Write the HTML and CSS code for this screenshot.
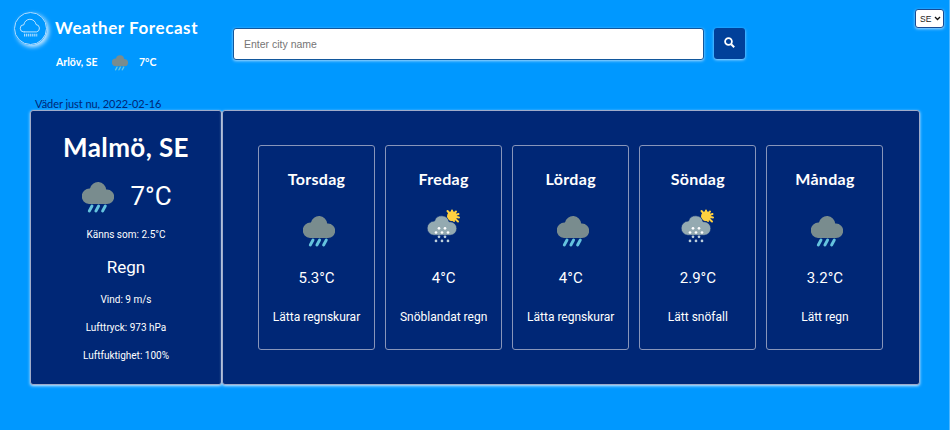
FILE: index.html
```html
<!DOCTYPE html>
<html lang="sv">
<head>
<meta charset="utf-8">
<title>Weather Forecast</title>
<link rel="stylesheet" href="styles.css">
</head>
<body>
<svg class="sprite" aria-hidden="true">
  <symbol id="rain" viewBox="0 0 32 33">
    <path fill="#798c8e" d="M7 24a7.3 7.3 0 0 1 1-15.500A8.200 8.200 0 0 1 24.200 9.600H25a7.200 7.200 0 0 1 0 14.400Z"/>
    <path stroke="#65c3de" stroke-width="2.900" stroke-linecap="round" d="M10 26l-2.700 5M16.600 26l-2.700 5M23.300 26l-2.700 5"/>
  </symbol>
  <symbol id="snow" viewBox="0 0 34 34">
    <path stroke="#ffd03f" stroke-width="2" stroke-linecap="round" d="M25 7V1.500M25 7l4-4.500M25 7l6.500-2M25 7l7 1.500M25 7l6 5.500M25 7l-4.500-5M25 7l2 5"/>
    <circle cx="25" cy="7.300" r="5" fill="#ffd03f"/>
    <path fill="#94aab1" stroke="#002776" stroke-width=".6" d="M7 26.300a6.900 6.900 0 0 1 .5-14.200A7.500 7.500 0 0 1 22 12.700h1a6.800 6.800 0 0 1 0 13.600Z"/>
    <g fill="#fff"><circle cx="12" cy="19.300" r="1.350"/><circle cx="18" cy="19.300" r="1.350"/><circle cx="9" cy="23.500" r="1.350"/><circle cx="15" cy="23.500" r="1.350"/><circle cx="21" cy="23.500" r="1.350"/></g>
    <g fill="#bdd0dc"><circle cx="12" cy="27.800" r="1.350"/><circle cx="18" cy="27.800" r="1.350"/><circle cx="9" cy="31.900" r="1.350"/><circle cx="15" cy="31.900" r="1.350"/><circle cx="21" cy="31.900" r="1.350"/></g>
  </symbol>
</svg>
<header class="header">
  <div class="brand">
    <div class="brand-row">
      <span class="logo"><svg viewBox="0 0 32 32" fill="none" stroke="#d5edff"><path stroke-width=".9" d="M10 19.500H9a3.700 3.700 0 0 1 .2-7.400 6.300 6.300 0 0 1 12.500-.2 3.900 3.900 0 0 1 .8 7.600H9"/><path stroke-width="2.800" stroke-dasharray="1 1.100" d="M9.500 22.800h13.400"/></svg></span>
      <h1 class="title">Weather Forecast</h1>
    </div>
    <div class="local"><span class="local-city">Arlöv, SE</span><svg class="local-icon"><use href="#rain"/></svg><span class="local-temp">7°C</span></div>
  </div>
  <form class="search">
    <input class="search-input" type="text" placeholder="Enter city name">
    <button class="search-button" type="button" aria-label="Search"><svg viewBox="0 0 11 11" fill="none" stroke="#fff" stroke-width="1.800"><circle cx="4.500" cy="4.500" r="3.400"/><path stroke-width="2" d="M7.200 7.200l3 3"/></svg></button>
  </form>
  <div class="language">SE<svg viewBox="0 0 8 6" fill="none" stroke="#111" stroke-width="1.600"><path d="M1 1.200l3 3 3-3"/></svg></div>
</header>
<main class="main">
  <p class="date">Väder just nu, 2022-02-16</p>
  <div class="weather">
    <section class="today">
      <h2 class="city">Malmö, SE</h2>
      <div class="now"><svg class="icon"><use href="#rain"/></svg><span>7°C</span></div>
      <p class="detail feels">Känns som: 2.5°C</p>
      <p class="condition">Regn</p>
      <p class="detail">Vind: 9 m/s</p>
      <p class="detail">Lufttryck: 973 hPa</p>
      <p class="detail">Luftfuktighet: 100%</p>
    </section>
    <section class="forecast">
      <article class="day"><h3>Torsdag</h3><svg class="icon"><use href="#rain"/></svg><p class="temp">5.3°C</p><p class="desc">Lätta regnskurar</p></article>
      <article class="day"><h3>Fredag</h3><svg class="icon icon-snow"><use href="#snow"/></svg><p class="temp">4°C</p><p class="desc">Snöblandat regn</p></article>
      <article class="day"><h3>Lördag</h3><svg class="icon"><use href="#rain"/></svg><p class="temp">4°C</p><p class="desc">Lätta regnskurar</p></article>
      <article class="day"><h3>Söndag</h3><svg class="icon icon-snow"><use href="#snow"/></svg><p class="temp">2.9°C</p><p class="desc">Lätt snöfall</p></article>
      <article class="day"><h3>Måndag</h3><svg class="icon"><use href="#rain"/></svg><p class="temp">3.2°C</p><p class="desc">Lätt regn</p></article>
    </section>
  </div>
</main>
</body>
</html>
```

FILE: styles.css
```css
* { box-sizing: border-box; margin: 0; padding: 0; }
body { height: 430px; overflow: hidden; border-right: 1px solid #4db6ff; background: #0098ff; color: #fff; font-family: Roboto, "Liberation Sans", sans-serif; }
.sprite { display: none; }
svg { display: block; }
.header { display: flex; align-items: flex-start; height: 96px; padding: 9px 5px 0 14px; }
.brand { width: 219px; padding-top: 3px; }
.brand-row { display: flex; align-items: center; gap: 8px; height: 33px; }
.logo { width: 33px; height: 33px; border: 1px solid #b3ddff; border-radius: 50%; box-shadow: 2px 2px 4px #cbe9ff; }
.logo svg { width: 31px; height: 31px; }
.title { margin-top: -2px; font: 700 17px/30px Lato, sans-serif; letter-spacing: .57px; white-space: nowrap; }
.local { display: flex; align-items: center; height: 20px; margin: 7px 0 0 42px; font: 700 10.5px/20px Lato, sans-serif; }
.local-city { width: 56px; }
.local-icon { width: 16px; height: 17px; }
.local-temp { margin-left: 11px; }
.search { display: flex; gap: 10px; padding-top: 19px; }
.search-input { width: 471px; height: 32px; padding: 0 10px; border: 1px solid #12579c; border-radius: 3px; background: #fff; box-shadow: 0 1px 3px #a5d9ff; font: 10.5px "Liberation Sans", sans-serif; color: #222; }
.search-input::placeholder { color: #757575; }
.search-button { width: 31px; height: 31px; padding: 0 0 2px 10px; border: 0; border-radius: 3px; background: #00409a; box-shadow: 0 1px 3px #a5d9ff; }
.search-button svg { width: 11px; height: 11px; }
.language { display: flex; align-items: center; justify-content: space-between; width: 29px; height: 19px; margin-left: auto; padding: 0 2px 0 4px; border: 1px solid #174a93; border-radius: 3px; background: #fff; box-shadow: 0 1px 3px #a5d9ff; color: #222; font: 8.5px "Liberation Sans", sans-serif; }
.language svg { width: 7px; height: 5px; }
.main { padding: 0 29px 0 30px; }
.date { height: 14px; padding-left: 5px; color: #002776; font: 11px/15px Lato, sans-serif; letter-spacing: -.06px; }
.weather { display: grid; grid-template-columns: 192px 698px; height: 275px; text-align: center; }
.today, .forecast { border: 1px solid #9fabc9; border-radius: 3px; background: #002776; box-shadow: 0 1px 3px #cbe9ff; }
.today { padding-top: 19px; }
.city { font: 700 26px/34px Lato, sans-serif; letter-spacing: .4px; }
.icon { width: 32px; height: 33px; }
.now { display: flex; justify-content: center; align-items: center; gap: 16px; height: 35px; margin-top: 15px; padding-left: 2px; font-size: 26px; }
.now span { margin-top: -2px; }
.detail { height: 28px; font-size: 10px; line-height: 28px; }
.feels { margin-top: 7px; }
.condition { height: 37px; font-size: 17px; line-height: 37px; }
.forecast { display: grid; grid-template-columns: repeat(5, 1fr); gap: 10px; padding: 34px 35.500px 34px 35px; }
.day { display: flex; flex-direction: column; align-items: center; border: 1px solid #8895ba; border-radius: 3px; padding-top: 21px; }
.day h3 { font: 700 16px/24px Lato, sans-serif; letter-spacing: .3px; }
.day .icon { margin: 23px 0 0 5px; }
.day .icon-snow { width: 34px; height: 34px; margin: 18px 0 4px 0; }
.temp { margin-top: 20px; font-size: 15px; line-height: 22px; }
.desc { margin-top: 18px; font-size: 12px; line-height: 20px; white-space: nowrap; }
```
